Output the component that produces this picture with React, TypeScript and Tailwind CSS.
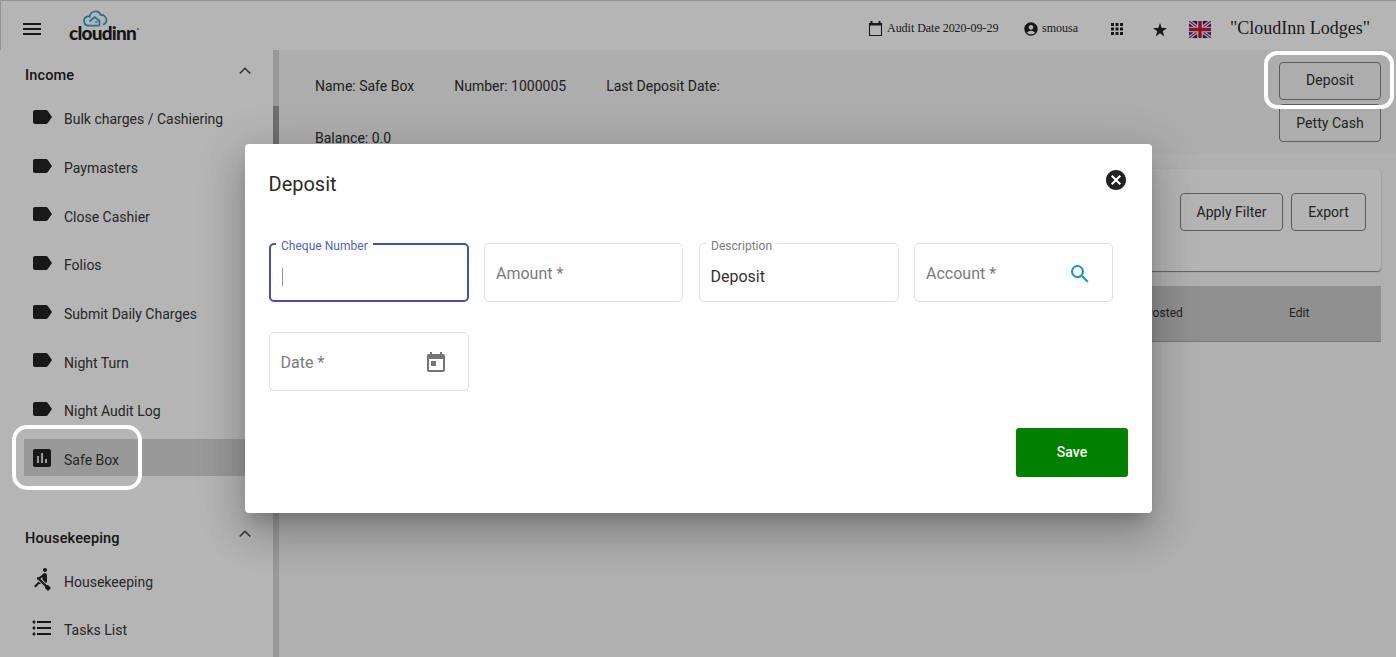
import type { ReactNode } from "react";
import type { IconType } from "react-icons";
import {
  MdAccountCircle,
  MdApps,
  MdAssessment,
  MdCancel,
  MdFormatListBulleted,
  MdLabel,
  MdMenu,
  MdRowing,
  MdSearch,
} from "react-icons/md";

const incomeItems = [
  "Bulk charges / Cashiering",
  "Paymasters",
  "Close Cashier",
  "Folios",
  "Submit Daily Charges",
  "Night Turn",
  "Night Audit Log",
];

function Logo() {
  return (
    <div className="relative w-[70px] h-8">
      <svg className="absolute left-[14px] top-0" width="25" height="17" viewBox="0 0 25 17" fill="none" stroke="#2f9fc8" strokeWidth="1.700">
        <path d="M16.500 15.700H5.600A4.700 4.700 0 0 1 4.800 6.400a5 5 0 0 1 2 .2A5.600 5.600 0 0 1 17.600 5a5 5 0 0 1 5.800 4.700A4.700 4.700 0 0 1 20 14.500" />
        <path d="M6.500 11.500 11.800 7.200 16.500 11V15.700M12.200 12h2.500" />
      </svg>
      <span className="absolute left-0 top-[11px] text-[19px] leading-[23px] font-black tracking-[-0.75px] text-[#1f1f1f] font-['Lato',sans-serif]">cloudinn</span>
      <span className="absolute left-[68px] top-[18px] size-[2px] rounded-full bg-[#777]" />
    </div>
  );
}

function Flag() {
  return (
    <svg width="22" height="17" viewBox="0 0 22 17">
      <path fill="#0a2a80" d="M0 0h22v17H0z" />
      <path stroke="#fff" strokeWidth="3.600" d="m0 0 22 17M22 0 0 17" />
      <path stroke="#d0103a" strokeWidth="1.300" d="m0 0 22 17M22 0 0 17" />
      <path stroke="#fff" strokeWidth="5.600" d="M11 0v17M0 8.500h22" />
      <path stroke="#d0103a" strokeWidth="3.400" d="M11 0v17M0 8.500h22" />
    </svg>
  );
}

function CalendarIcon() {
  return (
    <svg width="15" height="16" viewBox="0 0 15 16" fill="none" stroke="#252525">
      <path d="M1.500 2.500h12v12h-12z" strokeWidth="1.100" />
      <path d="M1 3.500h13M3.500 0v3M11.500 0v3" strokeWidth="2" />
    </svg>
  );
}

function StarIcon() {
  return (
    <svg width="14" height="14" viewBox="0 0 14 14" fill="#222">
      <path d="m7 0 1.700 5.100H14L9.700 8.300 11.300 13.500 7 10.300 2.700 13.500 4.300 8.300 0 5.100h5.300z" />
    </svg>
  );
}

function TodayIcon() {
  return (
    <svg width="24" height="24" viewBox="0 0 24 24" fill="#757575">
      <path d="M19 3h-1V1h-2v2H8V1H6v2H5c-1.110 0-1.990.9-1.990 2L3 19c0 1.100.89 2 2 2h14c1.100 0 2-.9 2-2V5c0-1.100-.9-2-2-2zm0 16H5V8h14v11zM7 10h5v5H7z" />
    </svg>
  );
}

function SectionTitle({ title }: { title: string }) {
  return (
    <div className="flex justify-between h-6 pl-[25px] pr-[22px]">
      <h2 className="mt-px text-[14.500px] leading-6 font-medium tracking-[0.15px] text-[#212121]">{title}</h2>
      <svg className="mt-[2px]" width="12" height="12" viewBox="0 0 12 12" fill="none" stroke="#444" strokeWidth="1.500">
        <path d="m.7 8.500 5.300-5.300 5.300 5.300" />
      </svg>
    </div>
  );
}

function SideItem({ label, icon: Icon, active }: { label: string; icon: IconType; active?: boolean }) {
  return (
    <div className={active ? "flex items-center h-[36.67px] ml-6 pl-[6px] mb-3 bg-[#d8d8d8]" : "flex items-center h-[36.67px] ml-6 pl-[6px] mb-3"}>
      <Icon size={24} color="#222" />
      <span className="ml-[10px] mt-[5px] text-[14px] leading-5 text-[#363636]">{label}</span>
    </div>
  );
}

function OutlineButton({ children, className }: { children: ReactNode; className: string }) {
  return (
    <button className={`border border-[#818181] rounded-[4px] h-[38px] text-[14px] tracking-[0.02px] text-[#303030] ${className}`}>
      {children}
    </button>
  );
}

function Field({ label, value, focused, icon }: { label: string; value?: string; focused?: boolean; icon?: ReactNode }) {
  const floating = focused || value !== undefined;
  return (
    <div className={`relative flex items-center justify-between h-[59px] rounded-[5px] ${focused ? "border-2 border-[#3f51b5] px-[10px]" : "border border-[#e0e0e0] px-[11px]"}`}>
      {floating ? (
        <>
          <span className={`absolute bg-white px-[5px] text-[12px] leading-4 tracking-[0.03px] ${focused ? "left-[5.500px] -top-[7px] text-[#5363be]" : "left-[6.500px] -top-[6px] text-[#7c7c7c]"}`}>
            {label}
          </span>
          {focused && <span className="mt-2 ml-[1px] w-px h-[18px] bg-[#8591d0]" />}
          {value && <span className="mt-[9px] text-[16px] text-[#333]">{value}</span>}
        </>
      ) : (
        <span className="mt-[2px] text-[16px] text-[#7c7c7c]">{label}</span>
      )}
      {icon}
    </div>
  );
}

export default function App() {
  return (
    <div className="relative w-[1396px] h-[657px] overflow-hidden bg-white font-['Roboto',sans-serif]">
      <header className="flex items-center h-[50px] border-t border-l border-[#d0d0d0] pt-2 pl-[19px] pr-[26px]">
        <MdMenu className="-mt-px" size={24} color="#222" />
        <div className="ml-[25px] -mt-[7px]">
          <Logo />
        </div>
        <div className="flex items-center ml-auto -mt-px font-['Liberation_Serif',serif] text-[#262626]">
          <CalendarIcon />
          <span className="-mt-[2px] ml-1 w-[112px] text-[12px] tracking-[-0.03px] whitespace-nowrap">Audit Date 2020-09-29</span>
          <MdAccountCircle className="ml-[24px]" size={16} color="#222" />
          <span className="-mt-[2px] ml-[3px] text-[12px] w-[37px]">smousa</span>
          <MdApps className="ml-[29px]" size={18} color="#222" />
          <span className="mt-px ml-[27px]">
            <StarIcon />
          </span>
          <span className="ml-[22px]">
            <Flag />
          </span>
          <span className="-mt-[2px] ml-[19px] w-[140px] text-[18px] leading-5 whitespace-nowrap">"CloudInn Lodges"</span>
        </div>
      </header>

      <div className="flex h-[607px]">
        <aside className="w-[273px] shrink-0 pt-[13px]">
          <SectionTitle title="Income" />
          <div className="pt-[11.600px] h-[439px]">
            {incomeItems.map((item) => (
              <SideItem key={item} label={item} icon={MdLabel} />
            ))}
            <SideItem label="Safe Box" icon={MdAssessment} active />
          </div>
          <SectionTitle title="Housekeeping" />
          <div className="pt-[11px]">
            <SideItem label="Housekeeping" icon={MdRowing} />
            <SideItem label="Tasks List" icon={MdFormatListBulleted} />
          </div>
        </aside>
        <div className="w-[6px] shrink-0 bg-[#d8d8d8] pt-[56px]">
          <div className="h-[250px] bg-[#9c9c9c]" />
        </div>

        <main className="flex-1 bg-[#f8f8f8]">
          <section className="flex justify-between h-[104px] bg-[#f4f4f4] pl-[36px] pr-[15px]">
            <div className="text-[14px] leading-5 text-[#2c2c2c]">
              <div className="flex gap-10 pt-[26px]">
                <span>Name: Safe Box</span>
                <span>Number: 1000005</span>
                <span>Last Deposit Date:</span>
              </div>
              <div className="pt-8">Balance: 0.0</div>
            </div>
            <div className="flex flex-col w-[102px] pt-3 gap-[4px]">
              <OutlineButton className="w-full pb-[2px]">Deposit</OutlineButton>
              <OutlineButton className="w-full">Petty Cash</OutlineButton>
            </div>
          </section>
          <section className="mt-[15px] ml-[20px] mr-[15px] h-[102px] rounded-[4px] bg-[#fefefe] shadow-[0_1px_1px_rgba(0,0,0,0.45),0_0_2px_rgba(0,0,0,0.06)]">
            <div className="flex justify-end gap-2 pt-6 pr-[15px]">
              <OutlineButton className="w-[103px]">Apply Filter</OutlineButton>
              <OutlineButton className="w-[75px]">Export</OutlineButton>
            </div>
          </section>
          <section className="flex items-center justify-end mt-[15px] ml-[20px] mr-[15px] h-[56px] border-b border-[#aaa] bg-[#cbcbcb] pr-[71px] pb-px text-[12px] tracking-[0.05px] text-[#303030]">
            <span className="w-[144px]">Posted</span>
            <span className="w-[21px]">Edit</span>
          </section>
        </main>
      </div>

      {/* modal over the page */}
      <div className="absolute inset-0 flex bg-black/[0.29] pt-[144px] pl-[244.500px]">
        <div className="w-[907.500px] h-[369px] rounded-[4px] bg-white px-6 shadow-[0_11px_15px_-7px_rgba(0,0,0,0.2),0_24px_38px_3px_rgba(0,0,0,0.14),0_9px_46px_8px_rgba(0,0,0,0.12)]">
          <div className="flex justify-between pt-6 h-[99px]">
            <h1 className="text-[20px] leading-8 text-[#2a2a2a]">Deposit</h1>
            <MdCancel size={24} color="#212121" />
          </div>
          <div className="grid grid-cols-[200px_199px_200px_199px] gap-x-[15.500px] gap-y-[30px]">
            <Field label="Cheque Number" focused />
            <Field label="Amount *" />
            <Field label="Description" value="Deposit" />
            <Field label="Account *" icon={<MdSearch className="mt-[3px] mr-[9px]" size={24} color="#1b94c8" />} />
            <Field label="Date *" icon={<span className="mt-[2px] mr-[9px]"><TodayIcon /></span>} />
          </div>
          <div className="flex justify-end pt-[37px]">
            <button className="w-[112px] h-[48.500px] rounded-[3px] bg-[#008000] text-[14px] font-medium text-white">Save</button>
          </div>
        </div>
      </div>

      <div className="absolute left-[12px] top-[425px] w-[130px] h-[65px] rounded-[15px] border-4 border-white" />
      <div className="absolute left-[1264px] top-[51px] w-[130px] h-[58px] rounded-[13px] border-4 border-white" />
    </div>
  );
}
